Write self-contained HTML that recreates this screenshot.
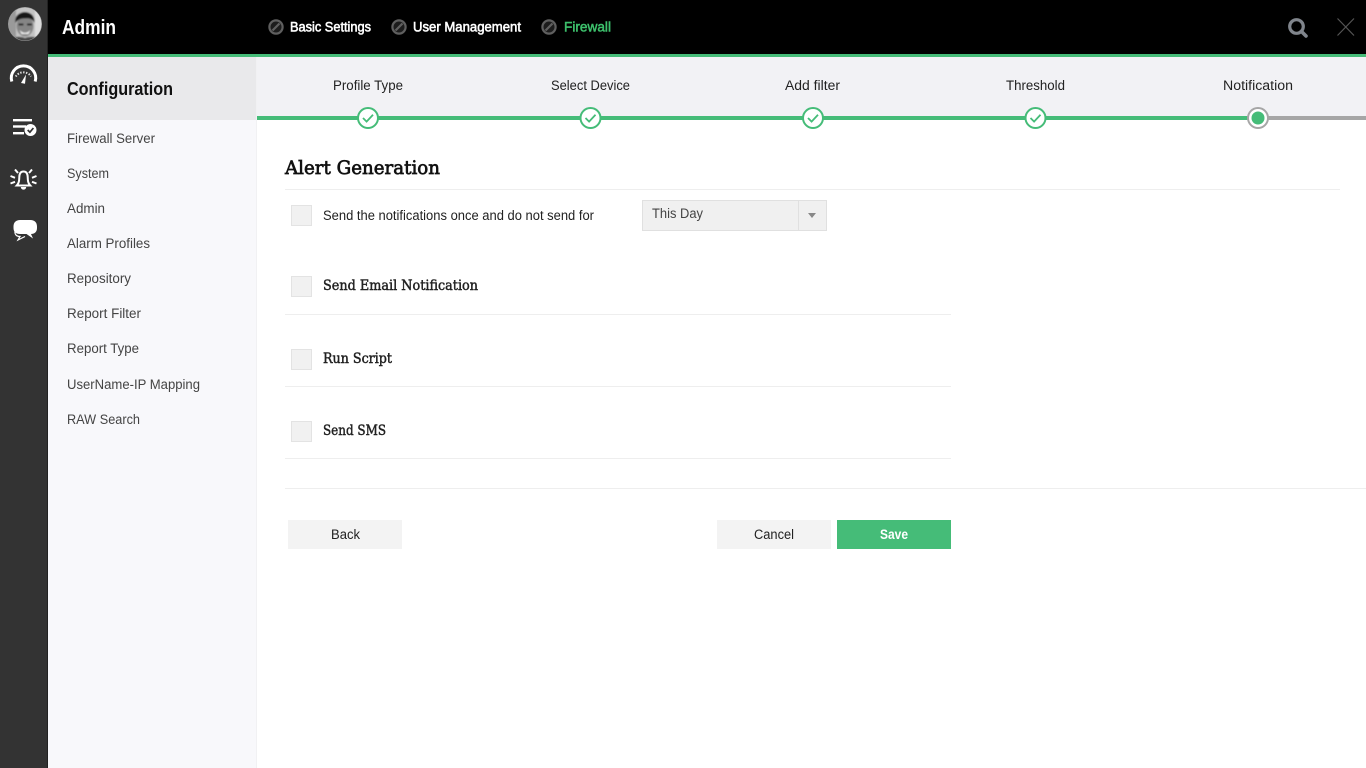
<!DOCTYPE html>
<html lang="en">
<head>
<meta charset="utf-8">
<title>Admin - Firewall</title>
<style>
html,body{margin:0;padding:0;width:1366px;height:768px;overflow:hidden;background:#fff}
svg{display:block;position:absolute;left:0;top:0}
text{font-family:"Liberation Sans",sans-serif;white-space:pre}
.m{font-size:13.5px;fill:#444}
.s{font-size:13.5px;fill:#222}
.n{font-size:13.5px;fill:#fff;stroke:#fff;stroke-width:.55px}
.b{font-family:"DejaVu Serif","Liberation Serif",serif}
</style>
</head>
<body>
<svg width="1366" height="768" viewBox="0 0 1366 768" xmlns="http://www.w3.org/2000/svg">
<defs>
<clipPath id="av"><circle cx="25" cy="24" r="16.5"/></clipPath>
<filter id="bl" x="-10%" y="-10%" width="120%" height="120%"><feGaussianBlur stdDeviation="0.8"/></filter>
<filter id="sf" x="-10%" y="-10%" width="120%" height="120%"><feGaussianBlur stdDeviation="0.25"/></filter>
</defs>

<!-- panels -->
<rect x="0" y="0" width="47" height="768" fill="#333"/>
<rect x="47" y="0" width="1" height="768" fill="#222"/>
<rect x="48" y="0" width="1318" height="54" fill="#000"/>
<rect x="48" y="54" width="1318" height="3" fill="#45bc78"/>
<rect x="48" y="57" width="208" height="711" fill="#f8f8fb"/>
<rect x="48" y="57" width="208" height="63" fill="#e9e9eb"/>
<rect x="256" y="57" width="1" height="711" fill="#f1f1f3"/>
<rect x="257" y="57" width="1109" height="59" fill="#f2f2f5"/>

<!-- avatar -->
<circle cx="25" cy="24" r="17" fill="#999"/>
<g clip-path="url(#av)">
<g filter="url(#bl)">
<rect x="8" y="7" width="34" height="34" fill="#c4c4c4"/>
<rect x="8" y="7" width="8" height="34" fill="#9a9a9a"/>
<rect x="35" y="7" width="7" height="34" fill="#dedede"/>
<ellipse cx="25" cy="26" rx="8.5" ry="10.5" fill="#858585"/>
<path d="M15.5 23C13 9 36 8 34.5 23C32.5 18.5 29 18 25 18.5C21 18.5 18 19 15.5 23Z" fill="#181818"/>
<rect x="18.5" y="23.5" width="5" height="2" fill="#222"/>
<rect x="27" y="23.5" width="5" height="2" fill="#222"/>
<path d="M19.5 30Q25 35.5 30.5 30L28.5 34H21.5Z" fill="#f2f2f2"/>
<path d="M9 42C11 37 18 35.5 25 38C32 35.5 39 37 41 42Z" fill="#4a4a4a"/>
</g>
</g>

<!-- gauge -->
<g filter="url(#sf)">
<path d="M11.8 82.5A12.2 12.2 0 1 1 35.2 82.5" fill="none" stroke="#fff" stroke-width="3" transform="translate(0,-1)"/>
<path d="M15.8 76.5A9 9 0 0 1 31 76.5" fill="none" stroke="#ddd" stroke-width="2" stroke-dasharray="1.4 1.5"/>
<path d="M21 83L26 74.5L25 83.8Z" fill="#fff"/>
</g>

<!-- list check -->
<g filter="url(#sf)">
<rect x="13" y="119" width="19" height="2.4" fill="#fff"/>
<rect x="13" y="125.3" width="13" height="2.4" fill="#fff"/>
<rect x="13" y="132" width="11" height="2.4" fill="#fff"/>
<circle cx="30.5" cy="130" r="6" fill="#fff"/>
<path d="M27.7 130L29.9 132.2L33.4 128" fill="none" stroke="#333" stroke-width="1.7"/>
</g>

<!-- bell -->
<g filter="url(#sf)">
<path d="M16.8 185.5H30.2C27.8 183 27.8 180 27.7 177C27.6 173.5 26.2 171.5 23.5 171.5C20.8 171.5 19.4 173.5 19.3 177C19.2 180 19.2 183 16.8 185.5Z" fill="none" stroke="#fff" stroke-width="2"/>
<path d="M20.8 187H26.2C26 190.5 21 190.5 20.8 187Z" fill="#fff"/>
<path d="M15 169.5L18 173M32 169.5L29 173M10.5 176L15 177.8M36.5 176L32 177.8M10.5 183.5L15 181.8M36.5 183.5L32 181.8" stroke="#fff" stroke-width="2" fill="none"/>
</g>

<!-- chat -->
<g filter="url(#sf)">
<path d="M15 231C14.5 235 17 236.5 20 236.5L18 240L25 236.5" fill="none" stroke="#fff" stroke-width="1.2"/>
<path d="M20 220H30.5C34.5 220 37 222.5 37 226.5V228C37 232 34.5 234 31 234L33 238.5L26.5 234H20C16 234 13.5 232 13.5 228V226.5C13.5 222.5 16 220 20 220Z" fill="#fff"/>
</g>

<!-- header -->
<text x="62" y="34" font-size="20" font-weight="bold" fill="#fff" textLength="54" lengthAdjust="spacingAndGlyphs">Admin</text>
<g fill="#1c1c1c" stroke="#5f5f5f" stroke-width="2.2">
<circle cx="276" cy="27" r="6.6"/><path d="M272.5 30.5L279.5 23.5"/>
<circle cx="399" cy="27" r="6.6"/><path d="M395.5 30.5L402.5 23.5"/>
<circle cx="549" cy="27" r="6.6"/><path d="M545.5 30.5L552.5 23.5"/>
</g>
<text class="n" x="290" y="31.5" textLength="81" lengthAdjust="spacingAndGlyphs">Basic Settings</text>
<text class="n" x="413" y="31.5" textLength="108" lengthAdjust="spacingAndGlyphs">User Management</text>
<text x="564" y="31.5" font-size="13.5" fill="#3dc06c" stroke="#3dc06c" stroke-width=".5" textLength="47" lengthAdjust="spacingAndGlyphs">Firewall</text>
<circle cx="1296.5" cy="26.5" r="6.8" fill="none" stroke="#80858c" stroke-width="3.2"/>
<path d="M1301.5 31.5L1306 36" stroke="#80858c" stroke-width="3.6" stroke-linecap="round"/>
<path d="M1337.5 18.5L1354 35.5M1354 18.5L1337.5 35.5" stroke="#555" stroke-width="1.2"/>

<!-- sidebar -->
<text x="67" y="95" font-size="18" font-weight="bold" fill="#111" textLength="106" lengthAdjust="spacingAndGlyphs">Configuration</text>
<text class="m" x="67" y="143" textLength="88" lengthAdjust="spacingAndGlyphs">Firewall Server</text>
<text class="m" x="67" y="178" textLength="42" lengthAdjust="spacingAndGlyphs">System</text>
<text class="m" x="67" y="213" textLength="38" lengthAdjust="spacingAndGlyphs">Admin</text>
<text class="m" x="67" y="248" textLength="83" lengthAdjust="spacingAndGlyphs">Alarm Profiles</text>
<text class="m" x="67" y="283" textLength="64" lengthAdjust="spacingAndGlyphs">Repository</text>
<text class="m" x="67" y="318" textLength="74" lengthAdjust="spacingAndGlyphs">Report Filter</text>
<text class="m" x="67" y="353" textLength="72" lengthAdjust="spacingAndGlyphs">Report Type</text>
<text class="m" x="67" y="389" textLength="133" lengthAdjust="spacingAndGlyphs">UserName-IP Mapping</text>
<text class="m" x="67" y="424" textLength="73" lengthAdjust="spacingAndGlyphs">RAW Search</text>

<!-- stepper -->
<text class="s" x="333" y="90" textLength="70" lengthAdjust="spacingAndGlyphs">Profile Type</text>
<text class="s" x="551" y="90" textLength="79" lengthAdjust="spacingAndGlyphs">Select Device</text>
<text class="s" x="785" y="90" textLength="55" lengthAdjust="spacingAndGlyphs">Add filter</text>
<text class="s" x="1006" y="90" textLength="59" lengthAdjust="spacingAndGlyphs">Threshold</text>
<text class="s" x="1223" y="90" textLength="70" lengthAdjust="spacingAndGlyphs">Notification</text>
<rect x="257" y="116" width="1001" height="4" fill="#45bc78"/>
<rect x="1258" y="116" width="108" height="4" fill="#a6a6a6"/>
<g fill="#fff" stroke="#45bc78" stroke-width="2">
<circle cx="368" cy="118" r="10"/><circle cx="590.5" cy="118" r="10"/><circle cx="813" cy="118" r="10"/><circle cx="1035.5" cy="118" r="10"/>
</g>
<g fill="none" stroke="#45bc78" stroke-width="1.8">
<path d="M363 118L366.6 121.6L373 114.8"/>
<path d="M585.5 118L589.1 121.6L595.5 114.8"/>
<path d="M808 118L811.6 121.6L818 114.8"/>
<path d="M1030.5 118L1034.1 121.6L1040.5 114.8"/>
</g>
<circle cx="1258" cy="118" r="10" fill="#fff" stroke="#a6a6a6" stroke-width="2"/>
<circle cx="1258" cy="118" r="6.5" fill="#45bc78"/>

<!-- form -->
<text class="b" x="285" y="174" font-size="19" fill="#111" stroke="#111" stroke-width=".7" textLength="155" lengthAdjust="spacingAndGlyphs">Alert Generation</text>
<rect x="285" y="189" width="1055" height="1" fill="#eee"/>

<g fill="#f1f1f1" stroke="#e3e3e3" stroke-width="1">
<rect x="291.5" y="205.5" width="20" height="20"/>
<rect x="291.5" y="276.5" width="20" height="20"/>
<rect x="291.5" y="349.5" width="20" height="20"/>
<rect x="291.5" y="421.5" width="20" height="20"/>
</g>
<text class="s" x="323" y="220" textLength="271" lengthAdjust="spacingAndGlyphs">Send the notifications once and do not send for</text>

<rect x="642.5" y="200.5" width="184" height="30" fill="#f0f0f0" stroke="#e0e0e0"/>
<rect x="798" y="201" width="1" height="29" fill="#e0e0e0"/>
<text x="652" y="218" font-size="13.5" fill="#444" textLength="51" lengthAdjust="spacingAndGlyphs">This Day</text>
<path d="M808 213H816L812 218Z" fill="#888"/>

<text class="b" x="323" y="290" font-size="13.5" fill="#222" stroke="#222" stroke-width=".45" textLength="155" lengthAdjust="spacingAndGlyphs">Send Email Notification</text>
<rect x="285" y="314" width="666" height="1" fill="#eee"/>
<text class="b" x="323" y="363" font-size="13.5" fill="#222" stroke="#222" stroke-width=".45" textLength="69" lengthAdjust="spacingAndGlyphs">Run Script</text>
<rect x="285" y="386" width="666" height="1" fill="#eee"/>
<text class="b" x="323" y="435" font-size="13.5" fill="#222" stroke="#222" stroke-width=".45" textLength="63" lengthAdjust="spacingAndGlyphs">Send SMS</text>
<rect x="285" y="458" width="666" height="1" fill="#eee"/>
<rect x="285" y="488" width="1081" height="1" fill="#eee"/>

<!-- buttons -->
<rect x="288" y="520" width="114" height="29" fill="#f3f3f3"/>
<rect x="717" y="520" width="114" height="29" fill="#f3f3f3"/>
<rect x="837" y="520" width="114" height="29" fill="#45bc78"/>
<text x="331" y="539" font-size="13.5" fill="#222" textLength="29" lengthAdjust="spacingAndGlyphs">Back</text>
<text x="754" y="539" font-size="13.5" fill="#222" textLength="40" lengthAdjust="spacingAndGlyphs">Cancel</text>
<text x="880" y="539" font-size="13.5" font-weight="bold" fill="#fff" textLength="28" lengthAdjust="spacingAndGlyphs">Save</text>
</svg>
</body>
</html>
